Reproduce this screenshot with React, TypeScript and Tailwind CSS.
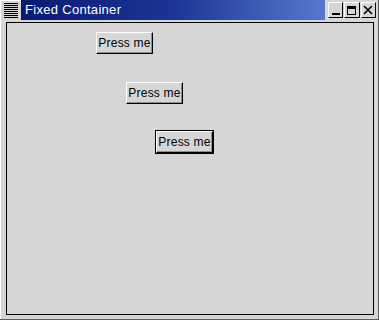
import React from 'react';

const font = { fontFamily: '"Liberation Sans", Arial, sans-serif' };

const PressButton: React.FC<{ left: string; top: string; focused?: boolean }> = ({ left, top, focused }) => (
  <div className={`absolute ${left} ${top} ${focused ? 'border border-black' : 'border border-transparent'}`}>
    <button
      className="w-[57px] h-[22px] bg-[#d6d6d6] border border-t-white border-l-white border-r-black border-b-black shadow-[inset_-1px_-1px_0_#8e8e8e] text-[12px] tracking-[0.2px] text-black leading-none flex items-center justify-center pb-px"
      style={font}
    >
      Press me
    </button>
  </div>
);

const App: React.FC = () => {
  return (
    <div className="w-[379px] h-[320px] bg-[#d6d6d6] flex flex-col overflow-hidden border-r border-b border-r-[#5c5c5c] border-b-[#5c5c5c]" style={font}>
      {/* Title bar */}
      <div className="h-[20px] flex items-stretch">
        <div className="w-[21px] flex flex-col justify-center gap-px pl-[3px] pr-[3px] border-l border-t border-white">
          {Array.from({ length: 8 }).map((_, i) => (
            <div key={i} className="h-px bg-black" />
          ))}
        </div>
        <div className="flex-1 bg-gradient-to-r from-[#0a1a72] via-[#1c3596] to-[#5878cc] flex items-center pl-[4px] text-white text-[13px] tracking-[0.3px]">
          Fixed Container
        </div>
        <div className="w-[53px] flex items-center gap-px pl-[3px] pr-[2px]">
          <div className="w-[16px] h-[16px] border border-t-white border-l-white border-r-black border-b-black flex items-end justify-center pb-[2px]">
            <div className="w-[8px] h-[2px] bg-black" />
          </div>
          <div className="w-[16px] h-[16px] border border-t-white border-l-white border-r-black border-b-black flex items-center justify-center">
            <div className="w-[9px] h-[9px] border border-black border-t-[3px]" />
          </div>
          <div className="w-[16px] h-[16px] border border-t-white border-l-white border-r-black border-b-black flex items-center justify-center">
            <svg width="10" height="10" viewBox="0 0 10 10">
              <path d="M1 1 L9 9 M9 1 L1 9" stroke="black" strokeWidth="1.6" />
            </svg>
          </div>
        </div>
      </div>
      {/* Client area */}
      <div className="flex-1 pl-[5px] pr-[4px] pt-[2px] pb-[4px] border-l border-white">
        <div className="relative w-full h-full border border-black">
          <PressButton left="left-[88px]" top="top-[8px]" />
          <PressButton left="left-[118px]" top="top-[58px]" />
          <PressButton left="left-[148px]" top="top-[107px]" focused />
        </div>
      </div>
    </div>
  );
};

export default App;
